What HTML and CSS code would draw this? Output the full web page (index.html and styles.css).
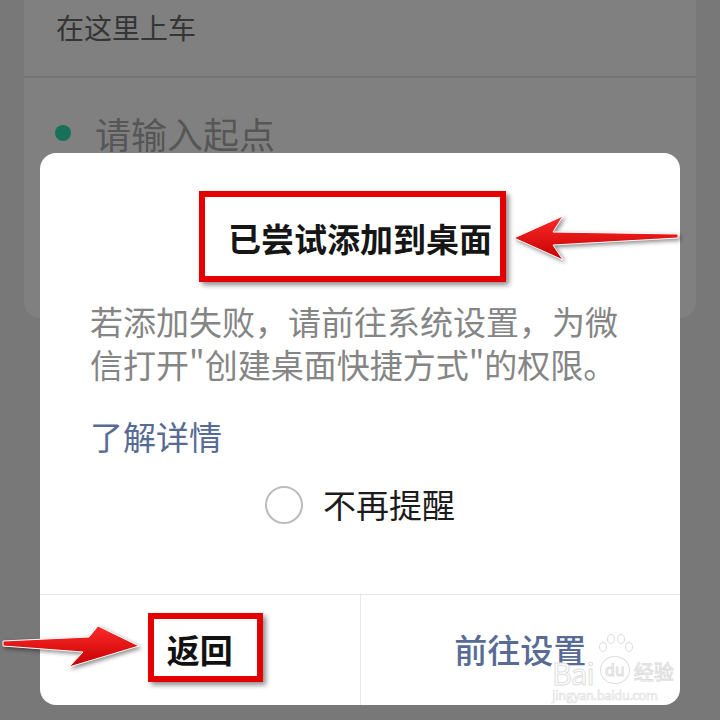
FILE: index.html
```html
<!DOCTYPE html>
<html lang="zh-CN">

<head>
    <meta charset="UTF-8">
    <meta name="viewport" content="width=device-width, initial-scale=1.0">
    <title>添加到桌面</title>
    <link rel="stylesheet" href="styles.css">
</head>

<body>
    <div class="screen">
        <div class="route-card">
            <div class="route-row pickup">在这里上车</div>
            <div class="route-row start">
                <span class="dot"></span>
                <span class="placeholder">请输入起点</span>
            </div>
        </div>

        <div class="dialog">
            <div class="dialog-body">
                <h2 class="dialog-title">已尝试添加到桌面</h2>
                <p class="dialog-text">若添加失败，请前往系统设置，为微信打开"创建桌面快捷方式"的权限。</p>
                <a class="dialog-link">了解详情</a>
                <label class="remind"><span class="radio"></span>不再提醒</label>
            </div>
            <div class="dialog-actions">
                <button class="action back">返回</button>
                <button class="action primary">前往设置</button>
            </div>

            <div class="watermark">
                <div class="wm-logo">
                    <span class="wm-bai">Bai</span>
                    <span class="wm-paw">
                        <span class="toe t1"></span>
                        <span class="toe t2"></span>
                        <span class="toe t3"></span>
                        <span class="toe t4"></span>
                        <span class="wm-du">du</span>
                    </span>
                    <span class="wm-jy">经验</span>
                </div>
                <div class="wm-url">jingyan.baidu.com</div>
            </div>
        </div>

        <!-- annotation marks -->
        <div class="mark mark-title"></div>
        <div class="mark mark-back"></div>
        <svg class="arrows" viewBox="0 0 720 720" width="720" height="720">
            <defs>
                <linearGradient id="red" x1="0" y1="0" x2="0" y2="1">
                    <stop offset="0" stop-color="#ff2a2a" />
                    <stop offset="1" stop-color="#c40000" />
                </linearGradient>
            </defs>
            <path d="M514 238 L563 216 L553 232 L678 234 L678 238 L553 245 L563 260 Z" fill="url(#red)" stroke="#fff" stroke-width="1" />
            <path d="M3 641 L89 637 L98 626 L139 646 L69 667 L83 652 L3 646 Z" fill="url(#red)" stroke="#fff" stroke-width="1" />
        </svg>
    </div>
</body>

</html>
```

FILE: styles.css
```css
* {
    margin: 0;
    padding: 0;
    box-sizing: border-box;
    font-family: "Noto Sans CJK SC", "Noto Sans", sans-serif;
}

body {
    background: #787878;
}

.screen {
    position: relative;
    width: 720px;
    height: 720px;
    overflow: hidden;
    background: #787878;
}

/* page behind the dialog */
.route-card {
    margin: 0 24px;
    height: 318px;
    background: #808080;
    border-radius: 0 0 16px 16px;
}

.route-row {
    display: flex;
    align-items: center;
}

.pickup {
    height: 78px;
    padding: 0 0 22px 32px;
    font-size: 28px;
    color: #353535;
    border-bottom: 2px solid #747474;
}

.start {
    padding: 33px 0 0 31px;
    gap: 24px;
}

.dot {
    width: 16px;
    height: 16px;
    border-radius: 50%;
    background: #17705a;
}

.placeholder {
    font-size: 36px;
    line-height: 44px;
    color: #565656;
}

/* dialog */
.dialog {
    position: absolute;
    top: 153px;
    left: 40px;
    width: 640px;
    height: 552px;
    background: #fff;
    border-radius: 16px;
    display: flex;
    flex-direction: column;
    overflow: hidden;
}

.dialog-body {
    flex: 1;
    padding: 64px 50px 0;
    display: flex;
    flex-direction: column;
}

.dialog-title {
    font-size: 33px;
    line-height: 43px;
    font-weight: 700;
    color: #161616;
    text-align: center;
}

.dialog-text {
    margin-top: 40px;
    font-size: 33px;
    line-height: 43px;
    color: #858585;
}

.dialog-link {
    margin-top: 29px;
    font-size: 33px;
    line-height: 43px;
    color: #576b95;
}

.remind {
    margin-top: 25px;
    display: flex;
    align-items: center;
    justify-content: center;
    gap: 20px;
    font-size: 33px;
    line-height: 43px;
    color: #1c1c1c;
}

.radio {
    width: 38px;
    height: 38px;
    border-radius: 50%;
    border: 2.5px solid #bcbcbc;
}

.dialog-actions {
    display: flex;
    height: 111px;
    border-top: 1px solid #e6e6e6;
}

.action {
    flex: 1;
    background: none;
    border: none;
    font-size: 33px;
    padding-bottom: 2px;
}

.back {
    border-right: 1px solid #e6e6e6;
    color: #111;
    font-weight: 700;
}

.primary {
    color: #576b95;
    font-weight: 500;
}

/* baidu watermark */
.watermark {
    position: absolute;
    right: 2px;
    bottom: 3px;
    width: 126px;
    color: #fff;
    font-family: "Liberation Sans", Arial, sans-serif;
}

.wm-logo {
    display: flex;
    align-items: flex-end;
    height: 52px;
}

.wm-bai {
    font-size: 30px;
    line-height: 24px;
    letter-spacing: -1px;
    -webkit-text-stroke: 1px #dedede;
}

.wm-paw {
    position: relative;
    width: 38px;
    height: 52px;
    margin-left: 2px;
}

.toe {
    position: absolute;
    width: 8px;
    height: 10px;
    border: 1px solid #dedede;
    border-radius: 50%;
}

.t1 { left: 3px; top: 10px; }
.t2 { left: 11px; top: 2px; }
.t3 { left: 21px; top: 2px; }
.t4 { left: 29px; top: 10px; }

.wm-du {
    position: absolute;
    left: 4px;
    bottom: 0;
    width: 30px;
    height: 28px;
    border: 1px solid #dedede;
    border-radius: 50%;
    font-size: 16px;
    line-height: 24px;
    text-align: center;
    -webkit-text-stroke: 1px #dedede;
}

.wm-jy {
    font-family: "Noto Sans CJK SC", sans-serif;
    font-size: 20px;
    line-height: 24px;
    -webkit-text-stroke: 1px #dedede;
}

.wm-url {
    margin-top: 4px;
    font-size: 13px;
    line-height: 14px;
    letter-spacing: -0.4px;
    -webkit-text-stroke: 0.6px #dedede;
}

/* red annotation boxes and arrows */
.mark {
    position: absolute;
    border: 6px solid #e40000;
    box-shadow: 3px 3px 5px rgba(0, 0, 0, 0.45);
}

.mark-title {
    left: 199px;
    top: 191px;
    width: 307px;
    height: 91px;
}

.mark-back {
    left: 148px;
    top: 613px;
    width: 115px;
    height: 69px;
}

.arrows {
    position: absolute;
    top: 0;
    left: 0;
    pointer-events: none;
    filter: drop-shadow(2px 2px 2px rgba(0, 0, 0, 0.45));
}
```
